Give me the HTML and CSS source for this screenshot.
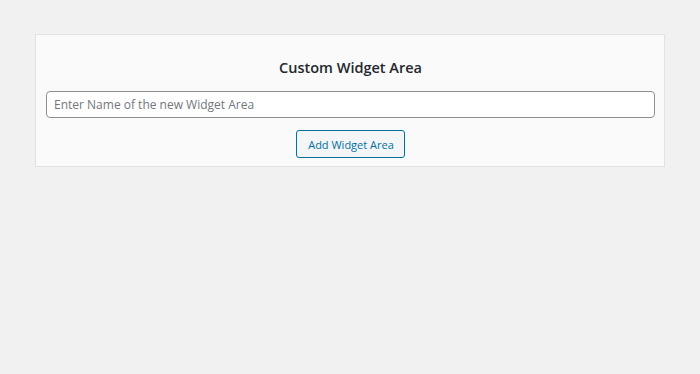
FILE: index.html
```html
<!DOCTYPE html>
<html>
<head>
  <title>Custom Widget Area</title>
  <link rel="stylesheet" href="styles.css">
</head>
<body>

  <div class="widget-box">
    <h3 class="widget-title">Custom Widget Area</h3>
    <input type="text" class="widget-name" placeholder="Enter Name of the new Widget Area">
    <div class="button-row">
      <button class="add-btn">Add Widget Area</button>
    </div>
  </div>

</body>
</html>
```

FILE: styles.css
```css
body {
  margin: 0;
  background: #f1f1f1;
  color: #23282d;
  font-family: 'Open Sans', sans-serif;
  padding: 34px 35px;
}

.widget-box {
  background: #fafafa;
  border: 1px solid #e2e2e2;
  padding: 10px 9px 8px 10px;
}

.widget-title {
  text-align: center;
  font-size: 14.5px;
  font-weight: 600;
  line-height: 20px;
  margin: 13px 0 13px;
  color: #23282d;
}

.widget-name {
  display: block;
  box-sizing: border-box;
  width: 100%;
  height: 27px;
  padding: 0 7px;
  border: 1px solid #8c8f94;
  border-radius: 4px;
  background: #fff;
  font-family: 'Open Sans', sans-serif;
  font-size: 12px;
  color: #32373c;
}

.widget-name::placeholder {
  color: #72777c;
}

.button-row {
  display: flex;
  justify-content: center;
  margin-top: 12px;
}

.add-btn {
  height: 28px;
  padding: 0 10px 0 11px;
  background: #f3f5f6;
  border: 1px solid #0071a1;
  border-radius: 3px;
  color: #0071a1;
  font-family: 'Open Sans', sans-serif;
  font-size: 11px;
  cursor: pointer;
}

.add-btn:hover {
  background: #f1f1f1;
}
```
